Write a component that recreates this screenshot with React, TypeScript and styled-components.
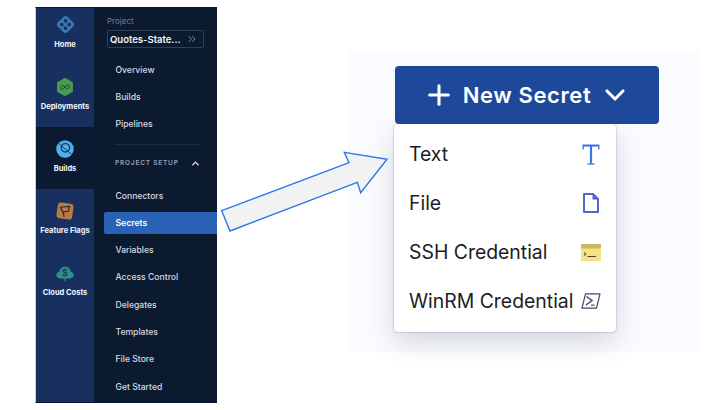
import styled, { createGlobalStyle } from 'styled-components';
import { ChevronDown, ChevronUp, ChevronsRight, Plus } from 'lucide-react';
import type { ReactNode } from 'react';

const GlobalStyle = createGlobalStyle`
  html, body {
    margin: 0;
    padding: 0;
    background: #fff;
  }
  * {
    box-sizing: border-box;
  }
`;

const Page = styled.div`
  position: relative;
  width: 720px;
  height: 410px;
  overflow: hidden;
  display: flex;
  align-items: flex-start;
  padding: 7px 0 0 35px;
  font-family: Inter, 'Liberation Sans', sans-serif;
`;

const Sidebar = styled.aside`
  width: 182px;
  height: 396px;
  display: flex;
  flex-shrink: 0;
  border-left: 1px solid #c9d0dc;
  border-top: 1px solid #0b1424;
  border-bottom: 1px solid #0b1034;
`;

const Rail = styled.nav`
  width: 58px;
  background: #17305f;
  display: flex;
  flex-direction: column;
`;

const RailItem = styled.div<{ $active?: boolean; $first?: boolean }>`
  height: ${(p) => (p.$first ? '57px' : '62px')};
  background: ${(p) => (p.$active ? '#0b1a30' : 'transparent')};
  display: flex;
  flex-direction: column;
  align-items: center;
  justify-content: flex-end;
  gap: 5px;
  padding-bottom: 15px;
`;

const RailLabel = styled.span`
  color: #f2f5fa;
  font-size: 7.5px;
  font-weight: 700;
  line-height: 10px;
  white-space: nowrap;
`;

const Nav = styled.div`
  width: 123px;
  background: #0b1a2e;
  display: flex;
  flex-direction: column;
  padding-top: 8px;
`;

const ProjectLabel = styled.div`
  color: #737f93;
  font-size: 8px;
  line-height: 10px;
  margin-left: 13px;
`;

const ProjectSelect = styled.div`
  width: 97px;
  height: 18px;
  margin: 4px 0 8px 13px;
  padding: 0 5px 0 2px;
  border: 1px solid #2f3e57;
  border-radius: 2px;
  display: flex;
  align-items: center;
  justify-content: space-between;
  color: #f2f5fa;
  font-size: 9.5px;
  font-weight: 600;
  white-space: nowrap;

  svg {
    color: #7b889c;
  }
`;

const NavLink = styled.div<{ $active?: boolean }>`
  height: ${(p) => (p.$active ? '22px' : '27.3px')};
  margin: ${(p) => (p.$active ? '2.65px 0 2.65px 10px' : '0')};
  padding-left: ${(p) => (p.$active ? '11.5px' : '21.5px')};
  display: flex;
  align-items: center;
  color: ${(p) => (p.$active ? '#fff' : '#d6dbe3')};
  background: ${(p) => (p.$active ? '#2a62b5' : 'transparent')};
  border-radius: 2px 0 0 2px;
  font-size: 8.6px;
  font-weight: ${(p) => (p.$active ? 600 : 500)};
  white-space: nowrap;
`;

const Divider = styled.div`
  height: 1px;
  margin: 6px 16px 0 21px;
  background: #1c2b42;
`;

const SectionHead = styled.div`
  height: 37px;
  padding: 0 16px 0 21px;
  display: flex;
  align-items: center;
  justify-content: space-between;
  color: #9aa4b4;
  font-size: 6.5px;
  font-weight: 600;
  letter-spacing: 0.8px;
  white-space: nowrap;

  svg {
    color: #dfe4ea;
  }
`;

const Panel = styled.section`
  width: 352px;
  height: 301px;
  margin: 44px 0 0 131px;
  flex-shrink: 0;
  background: #fafbfe;
  padding: 15px 41px 0 46px;
  display: flex;
  flex-direction: column;
  align-items: flex-start;
`;

const NewButton = styled.button`
  width: 264px;
  height: 58px;
  margin-left: 1px;
  flex-shrink: 0;
  background: #1e489a;
  border: none;
  border-radius: 4px;
  color: #fff;
  display: flex;
  align-items: center;
  justify-content: center;
  gap: 8px;
  font-family: inherit;
  font-size: 22px;
  font-weight: 600;
  letter-spacing: 0.6px;
  padding: 0;
`;

const Menu = styled.div`
  width: 222px;
  height: 208px;
  background: #fff;
  border-radius: 4px;
  box-shadow: 0 0 2px rgba(40, 50, 70, 0.45), 0 10px 26px rgba(60, 70, 100, 0.2);
  padding: 5.5px 15px;
  display: flex;
  flex-direction: column;
`;

const MenuRow = styled.div`
  height: 49px;
  flex-shrink: 0;
  display: flex;
  align-items: center;
  justify-content: space-between;
  color: #1c1c22;
  font-size: 19.4px;
  white-space: nowrap;
`;

const ArrowSvg = styled.svg`
  position: absolute;
  left: 215px;
  top: 145px;
`;

const HomeIcon = () => (
  <svg width="21" height="21" viewBox="0 0 24 24">
    <rect x="4.2" y="4.2" width="15.6" height="15.6" rx="3.5" fill="#3f77b5" transform="rotate(45 12 12)" />
    <circle cx="12" cy="7.8" r="2.1" fill="#17305f" />
    <circle cx="12" cy="16.2" r="2.1" fill="#17305f" />
    <circle cx="7.8" cy="12" r="2.1" fill="#17305f" />
    <circle cx="16.2" cy="12" r="2.1" fill="#17305f" />
  </svg>
);

const DeployIcon = () => (
  <svg width="20" height="20" viewBox="0 0 24 24">
    <path d="M12 2 L20.5 6.8 V17.2 L12 22 L3.5 17.2 V6.8 Z" fill="#4a9a50" stroke="#4a9a50" strokeWidth="2" strokeLinejoin="round" />
    <path
      d="M12 12 C10 9 6.8 10 6.8 12.8 C6.8 15.6 10.5 15.4 12 12 C13.5 8.8 17.2 8.6 17.2 11.3 C17.2 14 14 15 12 12 Z"
      fill="none"
      stroke="#1f4a4a"
      strokeWidth="1.2"
    />
  </svg>
);

const BuildsIcon = () => (
  <svg width="20" height="20" viewBox="0 0 24 24">
    <circle cx="12" cy="12" r="10.5" fill="#4fb0ee" />
    <circle cx="12.5" cy="10.5" r="5" fill="none" stroke="#173a5e" strokeWidth="1.7" />
    <path d="M4 5 L20 18.5" stroke="#173a5e" strokeWidth="1.2" />
  </svg>
);

const FlagsIcon = () => (
  <svg width="20" height="20" viewBox="0 0 24 24">
    <rect x="2.5" y="2.5" width="19" height="19" rx="4" fill="#b9793f" transform="rotate(8 12 12)" />
    <path d="M6.5 7.5 L17.5 6.5 L16 12.5 L9 13 Z M9.5 13 L11 19" fill="none" stroke="#1d3356" strokeWidth="1.5" strokeLinejoin="round" />
  </svg>
);

const CostsIcon = () => (
  <svg width="20" height="20" viewBox="0 0 24 24">
    <path
      d="M6 18.5 C2.8 18.5 1.5 16 1.5 14.5 C1.5 12.5 3 11 5 10.8 C5.5 7 8.5 4.5 12 4.5 C15.5 4.5 18.5 7 19 10.8 C21 11 22.5 12.5 22.5 14.5 C22.5 16 21.2 18.5 18 18.5 Z"
      fill="#2f8f8f"
    />
    <path d="M12 18 V22" stroke="#2f8f8f" strokeWidth="1.5" />
    <text x="12" y="16" textAnchor="middle" fontSize="11" fontWeight="600" fill="#123a5a" fontFamily="Inter, sans-serif">$</text>
  </svg>
);

const SerifT = () => (
  <svg width="19" height="21" viewBox="0 0 19 21" fill="none" stroke="#3b73e0" strokeWidth="1.3">
    <path d="M1.2 5.5 V1.2 H16.8 V5.5" />
    <path d="M1.2 1.8 H16.8" strokeWidth="1.6" />
    <path d="M9 1.5 V19.5" strokeWidth="2.2" />
    <path d="M5.5 20 H12.5" />
  </svg>
);

const FileGlyph = () => (
  <svg width="18" height="20" viewBox="0 0 18 20">
    <path d="M1 1 H10 L15 6 V19 H1 Z" fill="#fff" stroke="#5363cc" strokeWidth="2" strokeLinejoin="round" />
    <path d="M9.5 1 V6.5 H15 Z" fill="#5363cc" />
  </svg>
);

const TerminalGlyph = () => (
  <svg width="20" height="17" viewBox="0 0 20 17">
    <rect x="0" y="0" width="20" height="17" fill="#f6e283" />
    <rect x="0" y="0" width="20" height="4.5" fill="#c9b768" />
    <path d="M3 8.5 L5 10 L3 11.5" fill="none" stroke="#222" strokeWidth="0.9" />
    <path d="M6.5 12.5 H15" stroke="#333" strokeWidth="0.9" />
  </svg>
);

const ShellGlyph = () => (
  <svg width="20" height="16" viewBox="0 0 20 16" fill="none" stroke="#3b4a66">
    <path d="M4.5 0.8 H19 L15.5 15.2 H1 Z" strokeWidth="1.2" strokeLinejoin="round" />
    <path d="M5.5 3.5 L11 7.5 L5 12" strokeWidth="1.5" />
    <path d="M10 12.2 H13.5" strokeWidth="1.2" />
  </svg>
);

const railItems: { label: string; icon: ReactNode; active?: boolean }[] = [
  { label: 'Home', icon: <HomeIcon /> },
  { label: 'Deployments', icon: <DeployIcon /> },
  { label: 'Builds', icon: <BuildsIcon />, active: true },
  { label: 'Feature Flags', icon: <FlagsIcon /> },
  { label: 'Cloud Costs', icon: <CostsIcon /> },
];

const menuItems: { label: string; icon: ReactNode }[] = [
  { label: 'Text', icon: <SerifT /> },
  { label: 'File', icon: <FileGlyph /> },
  { label: 'SSH Credential', icon: <TerminalGlyph /> },
  { label: 'WinRM Credential', icon: <ShellGlyph /> },
];

const setupLinks = ['Connectors', 'Secrets', 'Variables', 'Access Control', 'Delegates', 'Templates', 'File Store', 'Get Started'];

export default function App() {
  return (
    <Page>
      <GlobalStyle />
      <Sidebar>
        <Rail>
          {railItems.map((item, i) => (
            <RailItem key={item.label} $active={item.active} $first={i === 0}>
              {item.icon}
              <RailLabel>{item.label}</RailLabel>
            </RailItem>
          ))}
        </Rail>
        <Nav>
          <ProjectLabel>Project</ProjectLabel>
          <ProjectSelect>
            Quotes-State...
            <ChevronsRight size={12} />
          </ProjectSelect>
          <NavLink>Overview</NavLink>
          <NavLink>Builds</NavLink>
          <NavLink>Pipelines</NavLink>
          <Divider />
          <SectionHead>
            PROJECT SETUP
            <ChevronUp size={11} strokeWidth={3} />
          </SectionHead>
          {setupLinks.map((name) => (
            <NavLink key={name} $active={name === 'Secrets'}>
              {name}
            </NavLink>
          ))}
        </Nav>
      </Sidebar>
      <Panel>
        <NewButton>
          <Plus size={32} strokeWidth={2.3} />
          New Secret
          <ChevronDown size={32} strokeWidth={2.3} />
        </NewButton>
        <Menu>
          {menuItems.map((item) => (
            <MenuRow key={item.label}>
              {item.label}
              {item.icon}
            </MenuRow>
          ))}
        </Menu>
      </Panel>
      <ArrowSvg width="180" height="95" viewBox="215 145 180 95">
        <path
          d="M221.7 210.7 L230 231 L357.3 182.3 L360.7 192.7 L387 159.3 L344.3 152.3 L349 162.7 Z"
          fill="#f2f2f2"
          stroke="#2f78e8"
          strokeWidth="1.4"
        />
      </ArrowSvg>
    </Page>
  );
}
